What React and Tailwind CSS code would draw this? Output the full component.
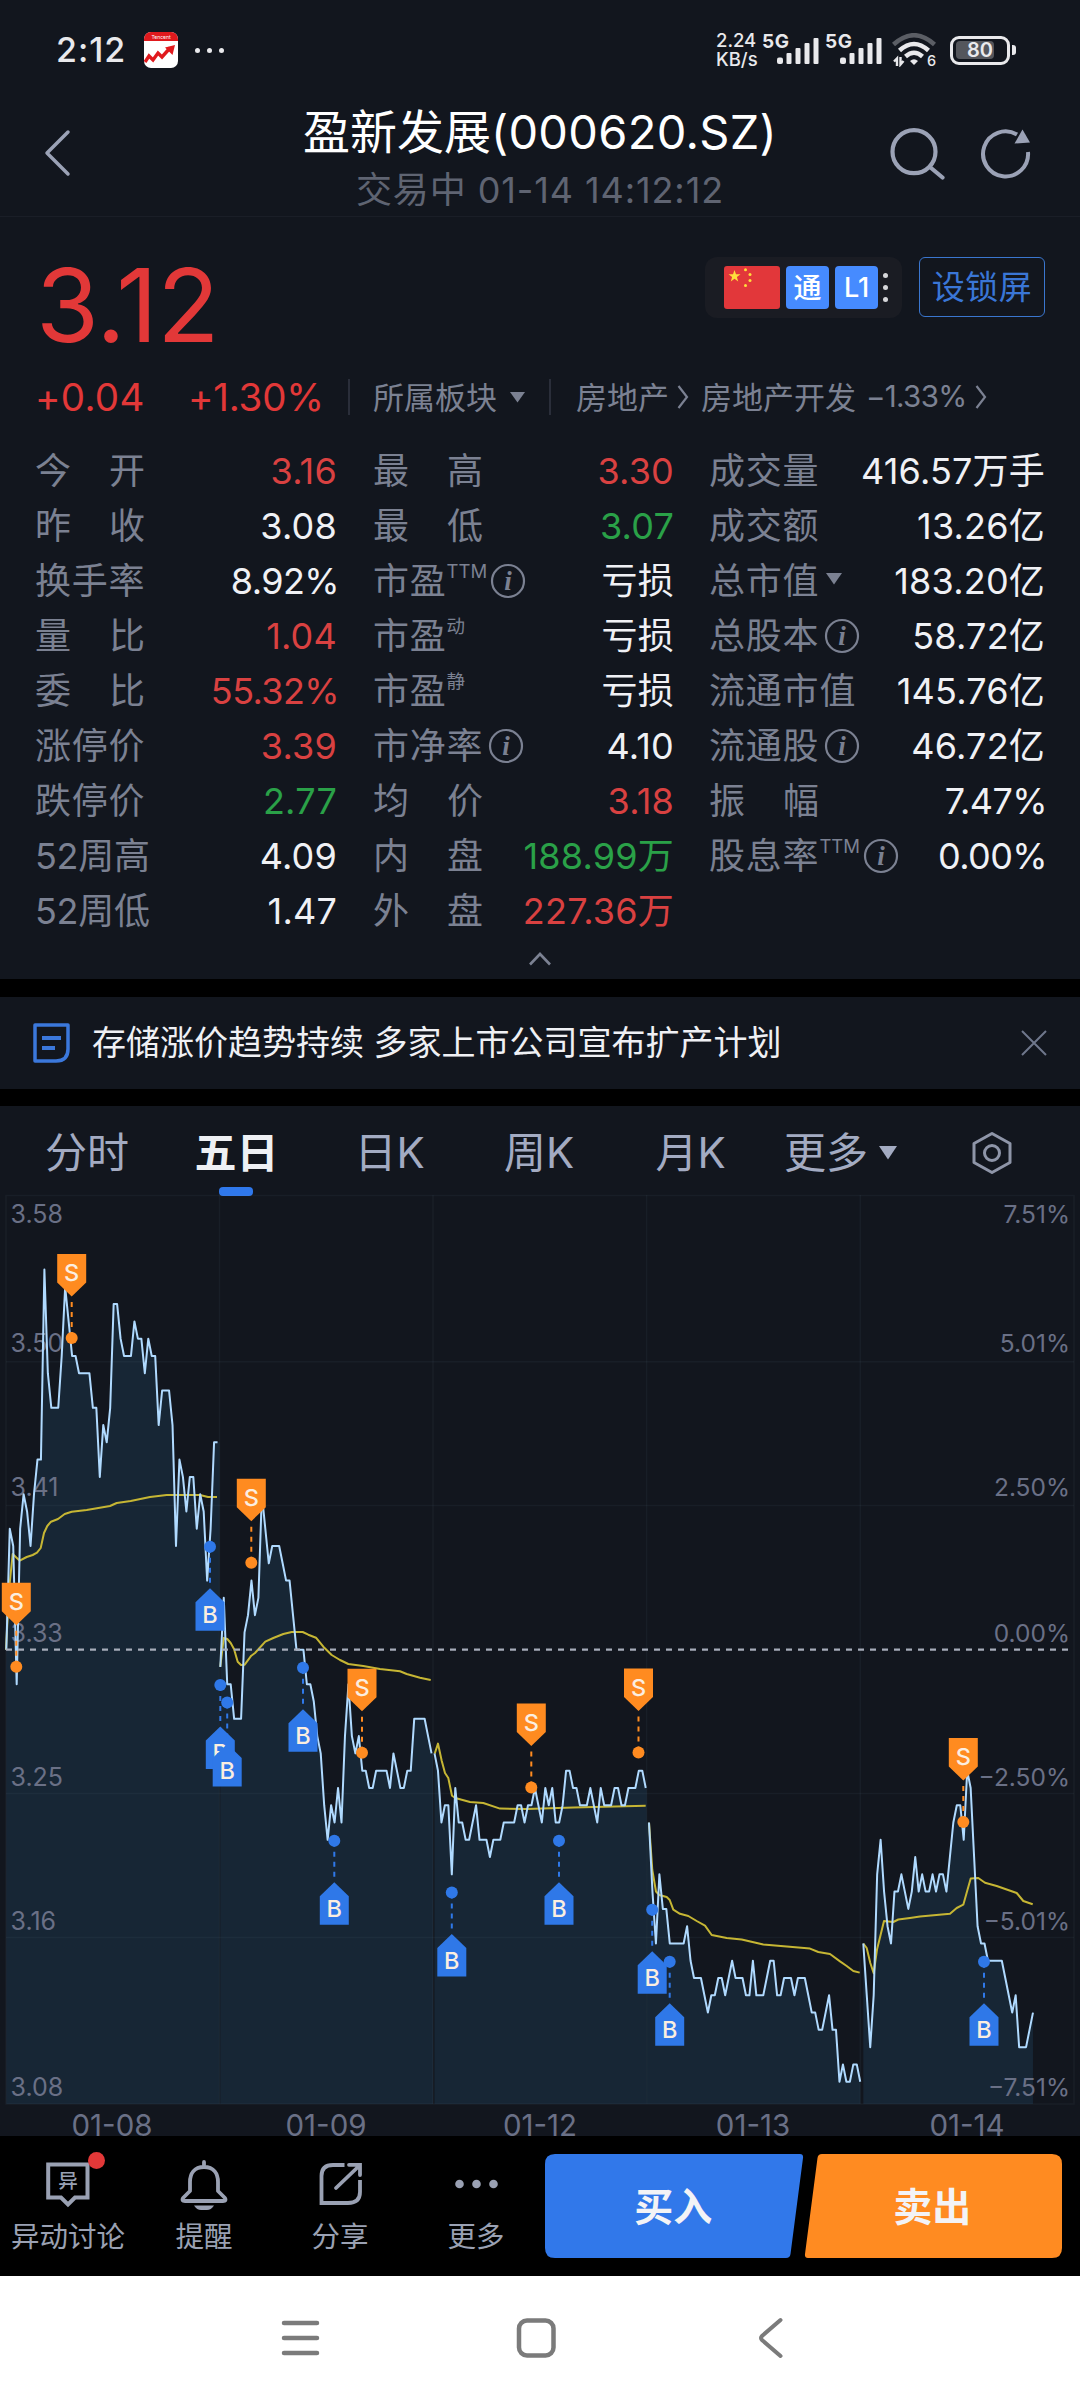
const STATS = [
  [
    { label: '今开', value: '3.16', tone: 'up', spread: true },
    { label: '昨收', value: '3.08', spread: true },
    { label: '换手率', value: '8.92%' },
    { label: '量比', value: '1.04', tone: 'up', spread: true },
    { label: '委比', value: '55.32%', tone: 'up', spread: true },
    { label: '涨停价', value: '3.39', tone: 'up' },
    { label: '跌停价', value: '2.77', tone: 'down' },
    { label: '52周高', value: '4.09', tight: true },
    { label: '52周低', value: '1.47', tight: true },
  ],
  [
    { label: '最高', value: '3.30', tone: 'up', spread: true },
    { label: '最低', value: '3.07', tone: 'down', spread: true },
    { label: '市盈', sup: 'TTM', info: true, value: '亏损' },
    { label: '市盈', sup: '动', value: '亏损' },
    { label: '市盈', sup: '静', value: '亏损' },
    { label: '市净率', info: true, value: '4.10' },
    { label: '均价', value: '3.18', tone: 'up', spread: true },
    { label: '内盘', value: '188.99万', tone: 'down', spread: true },
    { label: '外盘', value: '227.36万', tone: 'up', spread: true },
  ],
  [
    { label: '成交量', value: '416.57万手' },
    { label: '成交额', value: '13.26亿' },
    { label: '总市值', caret: true, value: '183.20亿' },
    { label: '总股本', info: true, value: '58.72亿' },
    { label: '流通市值', value: '145.76亿' },
    { label: '流通股', info: true, value: '46.72亿' },
    { label: '振幅', value: '7.47%', spread: true },
    { label: '股息率', sup: 'TTM', info: true, value: '0.00%' },
  ],
];

const TONES = {
  up: 'text-[#d94141]',
  down: 'text-[#2aa148]',
  flat: 'text-[#f0f1f5]',
};

// chart geometry: one tick is 0.01 yuan, zero is the 3.33 base line
const BASE_Y = 1649.7;
const TICK = 17.28;
const STEP = 3.463;
const FLOOR = 2104;

const DAYS = [
  {
    label: '01-08', x: 6.3, end: 219.5, labelX: 112,
    ticks: [0, 7, 6, -2, 7, 9, 8, 6, 9, 11, 11, 22, 16, 14, 14, 14, 17, 21, 19, 17, 17, 16, 16, 16, 16, 14, 14, 10, 13, 12, 14, 20, 20, 18, 17, 17, 17, 19, 18, 18, 16, 18, 17, 17, 13, 15, 15, 15, 13, 6, 11, 10, 8, 10, 10, 7, 9, 8, 4, 7, 12, 12],
    avg: '6,1649.7 9,1590 12.7,1554 19.7,1560.7 26.7,1557 32.7,1555 37,1552.7 40.7,1548 44,1533 47.3,1526 51,1521.7 58,1519 64.7,1514 71.7,1511.7 86.7,1510 110,1506 116.7,1503 130.7,1501 150,1497 166.7,1495 200,1495 208,1497 217,1497',
  },
  {
    label: '01-09', x: 220.3, end: 433, labelX: 326,
    ticks: [-1, 3, -2, -2, -4, -4, -4, 1, 2, 4, 2, 3, 9, 7, 5, 6, 6, 6, 5, 4, 4, 2, 0, 0, 0, -2, -2, -3, -5, -6, -9, -11, -9, -10, -8, -10, -5, -2, -5, -6, -5, -7, -7, -8, -8, -7, -7, -7, -7, -8, -6, -7, -8, -8, -7, -7, -4, -4, -4, -4, -5, -6],
    avg: '220.3,1666.7 223.7,1638 227.3,1639 230.7,1643 234,1649 237.7,1661.7 241,1665 244.7,1664.7 251.3,1655.7 255,1653 265.3,1641.7 273.3,1638 283.3,1634 291.7,1632 302.7,1632 308.3,1634.7 316,1637.7 323.3,1646.7 331.7,1655 340,1660 348.3,1664 363.3,1666 380,1669 400,1671.3 406.7,1674 420,1677.7 430.7,1680',
  },
  {
    label: '01-12', x: 434.5, end: 646.6, labelX: 540,
    ticks: [-6, -7, -10, -9, -9, -13, -8, -10, -10, -11, -11, -10, -9, -11, -11, -11, -12, -11, -11, -11, -10, -10, -10, -10, -9, -9, -10, -9, -9, -8, -9, -10, -8, -9, -8, -10, -10, -9, -7, -7, -8, -8, -9, -9, -9, -8, -9, -10, -8, -9, -9, -9, -8, -8, -9, -9, -8, -8, -8, -7, -7, -8],
    avg: '434.7,1753.6 438,1743.6 441.7,1760.7 445,1773 448.3,1778 452,1795.7 455.3,1798 470,1802 483.3,1803 500,1808.6 526.7,1809 573.3,1807.5 645.7,1805.7',
  },
  {
    label: '01-13', x: 649, end: 860, labelX: 753,
    ticks: [-10, -14, -17, -13, -15, -15, -17, -17, -17, -17, -17, -16, -18, -19, -19, -19, -20, -21, -20, -20, -19, -19, -20, -19, -18, -19, -19, -19, -20, -20, -18, -20, -20, -20, -19, -18, -18, -20, -20, -19, -19, -19, -20, -19, -19, -19, -20, -21, -21, -22, -22, -21, -20, -22, -22, -25, -24, -25, -25, -24, -24, -25],
    avg: '649,1822.8 652.3,1870 656,1891.5 659.3,1895 666.7,1897 669.7,1900 673.3,1909.7 680,1913.8 688.3,1916 696.7,1921 705,1925.6 711.7,1935 726.7,1938 741.7,1939.5 763.3,1944.5 786.7,1946.6 810,1948.6 818.3,1952 830,1954 840,1961.4 846.7,1966 853.3,1971 859.7,1972.6',
  },
  {
    label: '01-14', x: 863.3, end: 1032.7, labelX: 967,
    ticks: [-17, -20, -23, -20, -13, -11, -14, -16, -17, -14, -14, -13, -14, -15, -14, -12, -14, -13, -14, -14, -13, -14, -13, -13, -14, -12, -10, -9, -9, -11, -7, -8, -12, -16, -17, -17, -18, -18, -18, -18, -18, -19, -20, -21, -20, -23, -23, -23, -22, -21],
    avg: '863.3,1943.5 866.7,1948 870.3,1963 873.7,1973.3 877,1949.6 880.7,1934.4 884,1921 893.3,1922 898.3,1919.5 910,1918 920,1916.5 950,1913.8 956.7,1908 963.3,1904.7 967.3,1890.5 970.7,1878.6 978.3,1878 985,1882.7 996.7,1886 1016.7,1893 1023.3,1901 1032.7,1904.3',
  },
];

const TRADES = [
  { side: 'S', x: 16.3, y: 1666.7 },
  { side: 'S', x: 71.7, y: 1338 },
  { side: 'B', x: 210, y: 1546.7 },
  { side: 'B', x: 220.3, y: 1685 },
  { side: 'B', x: 227.2, y: 1702.5 },
  { side: 'S', x: 251.3, y: 1562.7 },
  { side: 'B', x: 303, y: 1667.7 },
  { side: 'B', x: 334.3, y: 1840.7 },
  { side: 'S', x: 362, y: 1752.7 },
  { side: 'B', x: 451.8, y: 1892.5 },
  { side: 'S', x: 531.3, y: 1787.5 },
  { side: 'B', x: 559, y: 1840.7 },
  { side: 'S', x: 638.5, y: 1752.5 },
  { side: 'B', x: 652.2, y: 1909.7 },
  { side: 'B', x: 669.7, y: 1961.8 },
  { side: 'S', x: 963.3, y: 1822 },
  { side: 'B', x: 984, y: 1961.8 },
];

const AXIS = [
  { y: 1222.5, price: '3.58', pct: '7.51%' },
  { y: 1352, price: '3.50', pct: '5.01%' },
  { y: 1496, price: '3.41', pct: '2.50%' },
  { y: 1641.5, price: '3.33', pct: '0.00%' },
  { y: 1785.5, price: '3.25', pct: '−2.50%' },
  { y: 1929.5, price: '3.16', pct: '−5.01%' },
  { y: 2095.5, price: '3.08', pct: '−7.51%' },
];

function Signal() {
  return (
    <svg width="43" height="28" viewBox="0 0 43 28" fill="#e9e9ec">
      <rect x="0" y="20.5" width="6" height="6.5" rx="2" />
      <rect x="9.5" y="16" width="5" height="11" rx="1" />
      <rect x="18.5" y="11" width="5" height="16" rx="1" />
      <rect x="27.5" y="6" width="5" height="21" rx="1" />
      <rect x="36.5" y="1" width="5" height="26" rx="1" />
    </svg>
  );
}

function StatusBar() {
  return (
    <div className="flex h-[100px] items-center pl-[56px] pr-[64px] text-[#e9e9ec]">
      <span className="w-[88px] text-[34px] font-medium leading-none tracking-[1px]">2:12</span>
      <svg width="34" height="36" viewBox="0 0 34 36">
        <rect width="34" height="36" rx="7" fill="#fff" />
        <path d="M0 9V7a7 7 0 0 1 7-7h20a7 7 0 0 1 7 7v2z" fill="#e0191d" />
        <text x="17" y="6.5" fontSize="5" fill="#fff" textAnchor="middle">Tencent</text>
        <path d="M1 30l4-6 4 4 5-7 4 4 8-9" fill="none" stroke="#e0191d" strokeWidth="3.4" />
        <path d="M21 15.5l10-2.5-2.500 10z" fill="#e0191d" />
      </svg>
      <div className="ml-[17px] flex gap-[7px]">
        <span className="size-[5px] rounded-full bg-[#e9e9ec]" />
        <span className="size-[5px] rounded-full bg-[#e9e9ec]" />
        <span className="size-[5px] rounded-full bg-[#e9e9ec]" />
      </div>
      <div className="ml-auto flex items-center">
        <div className="w-[46px] text-[18.500px] font-medium leading-[19px]">
          <div>2.24</div>
          <div>KB/s</div>
        </div>
        <div className="flex h-[32px] items-start">
          <span className="w-[26px] text-[19px] font-bold leading-[16px] tracking-[0.5px]">5G</span>
          <span className="-ml-[11px] mt-[3px]"><Signal /></span>
        </div>
        <div className="ml-[5px] flex h-[32px] items-start">
          <span className="w-[26px] text-[19px] font-bold leading-[16px] tracking-[0.5px]">5G</span>
          <span className="-ml-[11px] mt-[3px]"><Signal /></span>
        </div>
        <svg className="ml-[9px]" width="46" height="34" viewBox="0 0 46 34" fill="none">
          <path d="M1.500 11.500Q22 -7 42.500 11.500" stroke="#5b5e65" strokeWidth="4.500" />
          <path d="M7.500 17.500Q22 4.500 36.500 17.500" stroke="#e9e9ec" strokeWidth="4.500" />
          <path d="M13.500 23.500Q22 16 30.500 23.500" stroke="#e9e9ec" strokeWidth="4.500" />
          <path d="M18 28Q22 24.500 26 28L22 32z" fill="#e9e9ec" />
          <path d="M2 28.500l3-3V33M8.500 24v7.500l3-3.500" stroke="#e9e9ec" strokeWidth="2.400" />
          <text x="35" y="32.500" fontSize="14.500" fontWeight="500" fill="#e9e9ec">6</text>
        </svg>
        <div className="ml-[12px] flex h-[29px] w-[60px] items-center rounded-[9px] border-[3px] border-[#e9e9ec] p-[3px]">
          <div className="relative flex h-[18px] w-[38px] items-center rounded-[4px] bg-[#54565c]">
            <span className="w-[48px] shrink-0 text-center text-[20px] font-semibold leading-none">80</span>
          </div>
        </div>
        <span className="ml-[2px] h-[10px] w-[4px] rounded-r-[3px] bg-[#e9e9ec]" />
      </div>
    </div>
  );
}

function Header() {
  return (
    <header className="grid h-[117px] grid-cols-[1fr_auto_1fr] border-b border-[#1a1e27]">
      <svg className="ml-[42px] mt-[28px]" width="30" height="50" viewBox="0 0 30 50" fill="none">
        <path d="M26 4L5 25l21 21" stroke="#9ba2b6" strokeWidth="3.500" strokeLinecap="round" strokeLinejoin="round" />
      </svg>
      <div className="flex flex-col items-center pt-[6px]">
        <h1 className="whitespace-nowrap text-[47px] leading-[52px] text-white">
          盈新发展<span className="tracking-[0.3px]">(000620.SZ)</span>
        </h1>
        <p className="mt-[6px] text-[36px] leading-[52px] tracking-[0.9px] text-[#5f6472]">交易中 01-14 14:12:12</p>
      </div>
      <div className="flex justify-end pr-[46px] pt-[24px]">
        <svg className="mr-[31px]" width="58" height="60" viewBox="887 124 58 60" fill="none" stroke="#9ba2b6" strokeWidth="4.200">
          <circle cx="914" cy="151.700" r="21.500" />
          <path d="M930.500 167.500L942.500 177.500" strokeLinecap="round" />
        </svg>
        <svg width="58" height="60" viewBox="976 124 58 60" fill="none">
          <path d="M1028 152A22.500 22.500 0 1 1 1017 134.500" stroke="#9ba2b6" strokeWidth="4" />
          <path d="M1022.500 129.500l7.500 13-15.500 1z" fill="#9ba2b6" />
        </svg>
      </div>
    </header>
  );
}

function InfoIcon() {
  return (
    <svg className="ml-[5px]" width="36" height="36" viewBox="0 0 36 36" fill="none">
      <circle cx="18" cy="18" r="16" stroke="#7b8192" strokeWidth="2.200" />
      <text x="18" y="27" fontSize="27" fontStyle="italic" fontWeight="bold" textAnchor="middle" fill="#7b8192" className="font-['Liberation_Serif',serif]">i</text>
    </svg>
  );
}

function StatRow({ item }) {
  const percent = item.value.endsWith('%');
  return (
    <div className="flex h-[55px] items-center justify-between text-[36px] leading-none">
      <div className="flex items-center text-[#7b8192]">
        {item.spread ? (
          <span className="flex w-[110px] justify-between">
            <span>{item.label[0]}</span>
            <span>{item.label[1]}</span>
          </span>
        ) : (
          <span className={item.tight ? 'tracking-[-0.3px]' : 'tracking-[0.8px]'}>{item.label}</span>
        )}
        {item.sup && <span className="-mr-[2px] -mt-[18px] text-[18.500px]">{item.sup}</span>}
        {item.caret && (
          <svg className="ml-[6px] mt-[-4px]" width="18" height="12" viewBox="0 0 18 12"><path d="M1 0h16L9 11.500z" fill="#7b8192" /></svg>
        )}
        {item.info && <InfoIcon />}
      </div>
      <span className={`${TONES[item.tone || 'flat']} ${percent ? '-mr-[2px] tracking-[-0.6px]' : 'tracking-[0.2px]'}`}>{item.value}</span>
    </div>
  );
}

function Chevron() {
  return (
    <svg width="12" height="26" viewBox="0 0 12 26" fill="none" stroke="#7b8192" strokeWidth="2.200">
      <path d="M1.500 2l8.500 11-8.500 11" />
    </svg>
  );
}

function Quote() {
  return (
    <section className="px-[35px]">
      <div className="flex h-[140px] items-start pt-[38px]">
        <div className="pl-[1px] text-[102px] leading-[100px] tracking-[-0.5px] text-[#e23838]">3.12</div>
        <div className="ml-auto mt-[2px] flex h-[61px] w-[197px] items-center rounded-[12px] bg-[#1a1c23] pl-[19px]">
          <svg width="56" height="43" viewBox="0 0 56 43" fill="#ffde3b">
            <rect width="56" height="43" rx="3" fill="#e2373a" />
            <path d="M10.500 4l1.500 4.300h4.500l-3.600 2.700 1.300 4.500-3.700-2.700-3.700 2.700 1.300-4.500-3.600-2.700h4.500z" />
            <circle cx="21.500" cy="3.800" r="1.500" />
            <circle cx="26" cy="8.500" r="1.500" />
            <circle cx="26" cy="14.500" r="1.500" />
            <circle cx="21.500" cy="19.500" r="1.500" />
          </svg>
          <span className="ml-[6px] flex size-[43px] items-center justify-center rounded-[4px] bg-[#468bff] text-[28px] font-medium leading-none text-white">通</span>
          <span className="ml-[6px] flex size-[43px] items-center justify-center rounded-[4px] bg-[#468bff] text-[27px] font-medium leading-none text-white">L1</span>
          <div className="ml-[5px] flex flex-col gap-[7px]">
            <span className="size-[5px] rounded-full bg-[#d6d7da]" />
            <span className="size-[5px] rounded-full bg-[#d6d7da]" />
            <span className="size-[5px] rounded-full bg-[#d6d7da]" />
          </div>
        </div>
        <div className="ml-[17px] mt-[2px] flex h-[60px] w-[126px] items-center justify-center rounded-[6px] border border-[#3a76cf] text-[33px] leading-none tracking-[0.500px] text-[#3a76d6]">设锁屏</div>
      </div>

      <div className="flex h-[80px] items-center whitespace-nowrap leading-none text-[#7b8192]">
        <span className="w-[153px] text-[38.500px] tracking-[0.300px] text-[#e23838]">+0.04</span>
        <span className="w-[160px] text-[38.500px] tracking-[-0.200px] text-[#e23838]">+1.30%</span>
        <span className="h-[36px] w-[2px] bg-[#2a2e3a]" />
        <span className="ml-[23px] text-[31px]">所属板块</span>
        <svg className="ml-[13px]" width="16" height="11" viewBox="0 0 16 11"><path d="M0 0h15L7.500 10.500z" fill="#7b8192" /></svg>
        <span className="ml-[23px] h-[36px] w-[2px] bg-[#2a2e3a]" />
        <span className="ml-[25px] mr-[8px] text-[31px]">房地产</span>
        <Chevron />
        <span className="ml-[12px] text-[31px]">房地产开发</span>
        <span className="ml-[10px] mr-[9px] text-[29.500px] tracking-[-0.700px]">−1.33%</span>
        <Chevron />
      </div>

      <div className="flex pt-[6px]">
        {STATS.map((column, i) => (
          <div key={i} className={['w-[302px]', 'ml-[36px] w-[301px]', 'ml-[35px] w-[336px]'][i]}>
            {column.map((item) => (
              <StatRow key={item.label + (item.sup || '')} item={item} />
            ))}
          </div>
        ))}
      </div>
      <div className="flex h-[41px] items-center justify-center">
        <svg width="24" height="14" viewBox="0 0 24 14" fill="none" stroke="#7b8192" strokeWidth="2.600">
          <path d="M2 12.500L12 2l10 10.500" />
        </svg>
      </div>
    </section>
  );
}

function NewsBar() {
  return (
    <div className="flex h-[127px] items-center border-b-[17px] border-t-[18px] border-black pl-[32px] pr-[32px]">
      <svg width="40" height="42" viewBox="0 0 40 42" fill="none" stroke="#3b78dc" strokeWidth="3.500" strokeLinejoin="round">
        <path d="M3 3h33v24c0 8-4 12-12 12H3z" />
        <path d="M10 16h19M10 26h13" strokeWidth="3.800" />
      </svg>
      <span className="ml-[20px] text-[34px] leading-none text-[#eff0f4]">存储涨价趋势持续 多家上市公司宣布扩产计划</span>
      <svg className="ml-auto" width="28" height="28" viewBox="0 0 28 28" stroke="#6f778c" strokeWidth="2">
        <path d="M2 2l24 24M26 2L2 26" />
      </svg>
    </div>
  );
}

function Tabs() {
  const tabs = ['分时', '五日', '日K', '周K', '月K'];
  const places = ['w-[174px]', 'w-[125px]', 'w-[181px]', 'w-[118px]', 'w-[185px]'];
  return (
    <nav className="flex h-[84px] items-start whitespace-nowrap text-[42px] leading-none text-[#a3abc2]">
      {tabs.map((tab, i) => (
        <div key={tab} className={`${places[i]} flex h-full shrink-0 justify-center pt-[26px]`}>
          {tab === '五日' ? (
            <div className="flex flex-col items-center">
              <span className="font-bold text-[#eef0f4]">{tab}</span>
              <span className="mt-[13px] h-[9px] w-[34px] shrink-0 rounded-[4px] bg-[#2f78ec]" />
            </div>
          ) : tab}
        </div>
      ))}
      <div className="flex items-center pl-[1px] pt-[26px]">
        更多
        <svg className="ml-[10px] mt-[-1px]" width="20" height="14" viewBox="0 0 20 14"><path d="M1 0h18L10 13.500z" fill="#a3abc2" /></svg>
      </div>
      <svg className="ml-[73px] mt-[25px]" width="42" height="44" viewBox="0 0 42 44" fill="none" stroke="#8e95a8" strokeWidth="3">
        <path d="M21 2.500l18 10v19l-18 10-18-10v-19z" strokeLinejoin="round" />
        <circle cx="21" cy="22" r="7.500" />
      </svg>
    </nav>
  );
}

function Trade({ side, x, y }) {
  const sell = side === 'S';
  const color = sell ? '#ff8b20' : '#2f78e8';
  const dir = sell ? -1 : 1;
  const box = `M${x - 14.5} ${y + dir * 84}H${x + 14.5}V${y + dir * 55.5}L${x} ${y + dir * 41.5}L${x - 14.5} ${y + dir * 55.5}Z`;
  return (
    <g fill={color}>
      <path d={`M${x} ${y + dir * 36}V${y}`} stroke={color} strokeWidth="2" strokeDasharray="5 5" />
      <circle cx={x} cy={y} r="6" />
      <path d={box} />
      <text x={x} y={sell ? y - 57 : y + 76} fontSize="23.5" fontWeight="500" textAnchor="middle" fill="#fbeee0">{side}</text>
    </g>
  );
}

function Chart() {
  return (
    <svg className="block" width="1080" height="946" viewBox="0 1190 1080 946">
      {DAYS.map((day) => {
        const last = day.x + (day.ticks.length - 1) * STEP;
        const points = day.ticks.map((t, i) => `${day.x + i * STEP},${BASE_Y - t * TICK}`).join(' ');
        const lastY = BASE_Y - day.ticks[day.ticks.length - 1] * TICK;
        const left = day.label === '01-13' ? 646.6 : day.x;
        return (
          <polygon
            key={day.label}
            points={`${left},${FLOOR} ${left},${BASE_Y - day.ticks[0] * TICK} ${points} ${Math.max(last, day.end)},${lastY} ${Math.max(last, day.end)},${FLOOR}`}
            fill="#172635"
          />
        );
      })}
      <g stroke="#8fa3bb" strokeOpacity="0.06" strokeWidth="1.500" fill="none">
        <path d="M6 1195.500H1074V2104H6z" />
        <path d="M6 1361.700H1074M6 1505.500H1074M6 1793.500H1074M6 1937.500H1074" />
        <path d="M219.500 1195V2104M433 1195V2104M646.600 1195V2104M860.300 1195V2104" />
      </g>
      <g fontSize="25" fill="#6a7086">
        {AXIS.map((row) => (
          <g key={row.price}>
            <text x="10.500" y={row.y}>{row.price}</text>
            <text x="1070" y={row.y} textAnchor="end" fontSize="24.500">{row.pct}</text>
          </g>
        ))}
      </g>
      <g fontSize="29.500" fill="#6a7086">
        {DAYS.map((day) => (
          <text key={day.label} x={day.labelX} y="2136" textAnchor="middle">{day.label}</text>
        ))}
      </g>
      {DAYS.map((day) => (
        <g key={day.label} fill="none" strokeWidth="2" strokeLinejoin="round">
          <polyline points={day.avg} stroke="#c6b634" />
          <polyline points={day.ticks.map((t, i) => `${day.x + i * STEP},${BASE_Y - t * TICK}`).join(' ')} stroke="#b0daff" />
        </g>
      ))}
      <path d="M6 1649.700H1068" stroke="#a6acb9" strokeWidth="2.200" strokeDasharray="6 6" />
      {TRADES.map((trade, i) => (
        <Trade key={i} {...trade} />
      ))}
    </svg>
  );
}

function ActionBar() {
  return (
    <footer className="flex h-[140px] bg-black text-[28.500px] leading-none text-[#9aa1b3]">
      {/* each action sits in a 136px cell */}
      <div className="flex w-[136px] flex-col items-center pt-[16px]">
        <svg width="72" height="62" viewBox="32 2152 72 62" fill="none" overflow="visible">
          <path d="M48.200 2164.500H87.500V2197.500H75L68 2204.500L61 2197.500H48.200Z" stroke="#9aa1b3" strokeWidth="4" />
          <text x="68" y="2188" fontSize="19.500" fontWeight="500" textAnchor="middle" fill="#9aa1b3">异</text>
          <circle cx="96.500" cy="2160.500" r="8.500" fill="#e23838" />
        </svg>
        <span className="mt-[9px]">异动讨论</span>
      </div>
      <div className="flex w-[136px] flex-col items-center pt-[16px]">
        <svg width="72" height="62" viewBox="168 2152 72 62" fill="none">
          <path d="M204 2162V2165M204 2167C194 2167 190 2174 190 2182V2191L183 2198Q181 2201 185 2201H223Q227 2201 225 2198L218 2191V2182C218 2174 214 2167 204 2167Z" stroke="#9aa1b3" strokeWidth="3.800" strokeLinecap="round" strokeLinejoin="round" />
          <path d="M194 2205.500H214Q211 2210 207 2210H201Q197 2210 194 2205.500Z" fill="#9aa1b3" />
        </svg>
        <span className="mt-[9px]">提醒</span>
      </div>
      <div className="flex w-[136px] flex-col items-center pt-[16px]">
        <svg width="72" height="62" viewBox="304 2152 72 62" fill="none" stroke="#9aa1b3" strokeWidth="3.800">
          <path d="M344.500 2165H333Q321.500 2165 321.500 2176V2203H348Q360 2203 360 2192V2180" />
          <path d="M349 2164.800H360V2175M359 2166L336 2188" strokeLinecap="round" />
        </svg>
        <span className="mt-[9px]">分享</span>
      </div>
      <div className="flex w-[136px] flex-col items-center pt-[16px]">
        <svg width="72" height="62" viewBox="440 2152 72 62" fill="#9aa1b3">
          <circle cx="459.500" cy="2184" r="4.300" />
          <circle cx="476.500" cy="2184" r="4.300" />
          <circle cx="493.500" cy="2184" r="4.300" />
        </svg>
        <span className="mt-[9px]">更多</span>
      </div>
      <div className="relative ml-[1px] mt-[18px] h-[104px] w-[517px]">
        <svg className="absolute inset-0" width="517" height="104" viewBox="0 0 517 104">
          <path d="M10 0H255Q258.500 0 258 4L245.500 100Q245 104 241 104H10Q0 104 0 94V10Q0 0 10 0Z" fill="#3178ea" />
          <path d="M277 0H507Q517 0 517 10V94Q517 104 507 104H263Q259.500 104 260 100L272.500 4Q273 0 277 0Z" fill="#ff8b21" />
        </svg>
        <div className="relative grid h-full grid-cols-2 text-[39px] font-bold text-[#f3f3f6]">
          <span className="flex items-center justify-center pr-[2px]">买入</span>
          <span className="flex items-center justify-center pr-[1px]">卖出</span>
        </div>
      </div>
    </footer>
  );
}

function SystemNav() {
  return (
    <div className="flex h-[124px] items-center bg-white pl-[281px]">
      <svg width="40" height="40" viewBox="0 0 40 40" stroke="#7b7b7b" strokeWidth="4.500" strokeLinecap="round">
        <path d="M3 5h33M3 20h33M3 35h33" />
      </svg>
      <svg className="ml-[194px]" width="42" height="42" viewBox="0 0 42 42" fill="none">
        <rect x="4" y="3.500" width="34.500" height="35" rx="8" stroke="#7b7b7b" strokeWidth="4.500" />
      </svg>
      <svg className="ml-[199px]" width="30" height="44" viewBox="0 0 30 44" fill="none">
        <path d="M24.500 4L6 20Q4 22 6 24l18.500 16" stroke="#7b7b7b" strokeWidth="4" strokeLinecap="round" />
      </svg>
    </div>
  );
}

export default function App() {
  return (
    <div className="h-[2400px] w-[1080px] overflow-hidden bg-[#12161e] font-['Inter','Noto_Sans_CJK_SC',sans-serif]">
      <StatusBar />
      <Header />
      <Quote />
      <NewsBar />
      <Tabs />
      <Chart />
      <ActionBar />
      <SystemNav />
    </div>
  );
}
